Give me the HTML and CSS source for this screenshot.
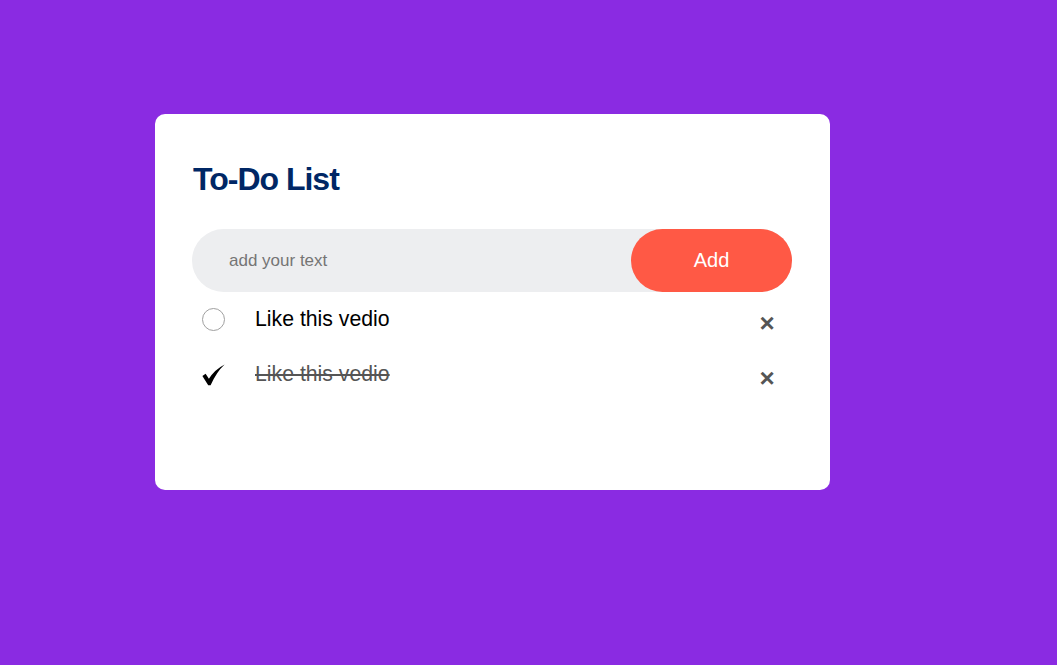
FILE: index.html
```html
<!DOCTYPE html>
<html lang="en">
<head>
<meta charset="utf-8">
<title>To-Do List</title>
<link rel="stylesheet" href="styles.css">
</head>
<body>
<div class="page">
  <div class="todo-app">
    <h2 class="title">To-Do List</h2>
    <div class="row">
      <input class="task-input" type="text" placeholder="add your text">
      <button class="add-btn">Add</button>
    </div>
    <ul class="list">
      <li class="item">
        <span class="mark mark-empty"></span>
        <span class="text">Like this vedio</span>
        <span class="close">×</span>
      </li>
      <li class="item checked">
        <span class="mark">
          <svg class="check" width="23" height="22" viewBox="0 0 23 22"><path d="M0.4 12 L3.6 9.8 L6.9 14.8 Q12.5 5.6 22.6 0.4 Q14.5 7.8 8.6 21.2 L6.2 21.2 Z" fill="#000"/></svg>
        </span>
        <span class="text">Like this vedio</span>
        <span class="close">×</span>
      </li>
    </ul>
  </div>
</div>
</body>
</html>
```
FILE: styles.css
```css
* {
  box-sizing: border-box;
}

html, body {
  margin: 0;
  padding: 0;
}

body {
  background: #8a2be2;
  font-family: "Liberation Sans", Arial, sans-serif;
  min-height: 665px;
}

.page {
  padding: 114px 0 0 155px;
}

.todo-app {
  width: 675px;
  height: 376px;
  background: #fff;
  border-radius: 10px;
  padding: 45px 38px 0 37px;
}

.title {
  margin: 0 0 30px 1px;
  font-size: 32px;
  line-height: 40px;
  letter-spacing: -1px;
  font-weight: bold;
  color: #002765;
}

.row {
  display: flex;
  align-items: center;
  background: #edeef0;
  border-radius: 32px;
  padding-left: 25px;
  height: 63px;
}

.task-input {
  flex: 1;
  border: none;
  outline: none;
  background: transparent;
  padding: 12px;
  font-family: "Liberation Sans", Arial, sans-serif;
  font-size: 17px;
  color: #000;
}

.task-input::placeholder {
  color: #757575;
}

.add-btn {
  border: none;
  outline: none;
  height: 63px;
  width: 161px;
  background: #ff5945;
  color: #fff;
  font-family: "Liberation Sans", Arial, sans-serif;
  font-size: 20px;
  border-radius: 40px;
  padding: 0;
}

.list {
  list-style: none;
  margin: 0;
  padding: 0;
}

.item {
  display: flex;
  align-items: center;
  height: 55px;
  font-size: 21.25px;
  color: #000;
}

.mark {
  width: 23px;
  height: 23px;
  margin-left: 10px;
  margin-right: 30px;
  display: flex;
  align-items: center;
  justify-content: center;
  flex: none;
}

.mark-empty {
  border: 1.3px solid #a0a0a0;
  border-radius: 50%;
}

.check {
  display: block;
}

.text {
  flex: 1;
}

.checked .text {
  color: #555;
  text-decoration: line-through;
}

.close {
  width: 50px;
  height: 50px;
  line-height: 50px;
  text-align: center;
  font-size: 26px;
  font-weight: bold;
  color: #555;
  margin-top: 6px;
  flex: none;
}
```
